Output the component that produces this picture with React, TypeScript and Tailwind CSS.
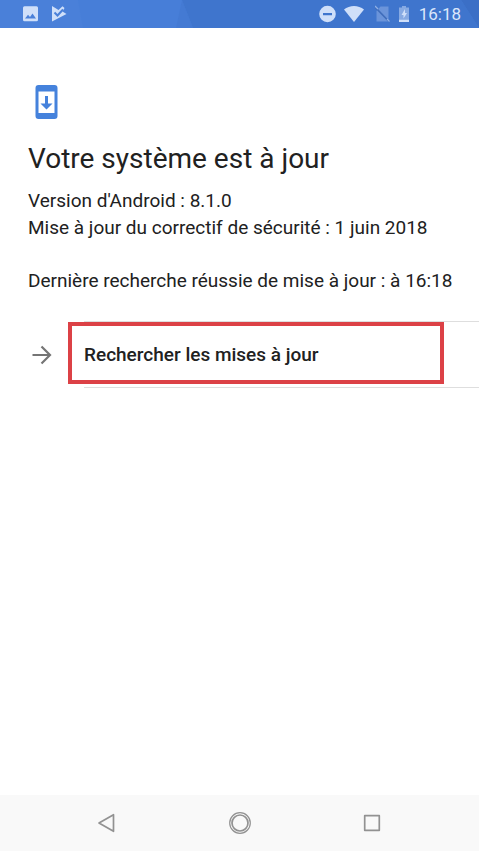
import { ReactNode } from 'react';

const INFO_LINES = [
  "Version d'Android : 8.1.0",
  'Mise à jour du correctif de sécurité : 1 juin 2018',
];

function StatusIcon({ width, children }: { width: number; children: ReactNode }) {
  return (
    <svg width={width} height={20} viewBox={`0 0 ${width} 20`} fill="#cfdff9" aria-hidden="true">
      {children}
    </svg>
  );
}

function StatusBar() {
  return (
    <header className="relative flex h-7 items-center justify-between overflow-hidden bg-[#4a80d9] pl-5 pr-[18px]">
      {/* Faceted backdrop */}
      <svg className="absolute inset-0 h-full w-full" viewBox="0 0 479 28" preserveAspectRatio="none" aria-hidden="true">
        <path d="M78 0H182L176 28H83Z" fill="#477ed8" />
        <path d="M182 0L193 28H176Z" fill="#447ad3" />
        <path d="M182 0H461L479 28H193Z" fill="#3f75cd" />
        <path d="M461 0H479V28Z" fill="#3b6fc6" />
      </svg>

      <div className="relative flex items-center gap-3">
        <StatusIcon width={20}>
          <path
            fillRule="evenodd"
            d="M4.500 2.200h12a1.500 1.500 0 0 1 1.500 1.500v12a1.500 1.500 0 0 1-1.500 1.500h-12a1.500 1.500 0 0 1-1.500-1.500v-12a1.500 1.500 0 0 1 1.500-1.500ZM5 14.500h11l-3.500-5-2.500 3.500-2-2.200Z"
          />
        </StatusIcon>
        <StatusIcon width={16}>
          <path d="M0 2L6.500 6 10.500 2.200 12.500 4 10.500 7.500 14.500 10 0 17.500Z" />
          <path d="M2.500 8.500l3 3 5.500-6" stroke="#4a80d9" strokeWidth="2" fill="none" />
        </StatusIcon>
      </div>

      <div className="relative flex items-center">
        <StatusIcon width={24}>
          <path fillRule="evenodd" d="M8.500 1.700a8.300 8.300 0 1 0 0 16.600 8.300 8.300 0 0 0 0-16.600ZM4 9h9v2.200H4Z" />
        </StatusIcon>
        <StatusIcon width={32}>
          <path d="M1 5.500C6.500 .8 15.500 .8 21 5.500L11 18Z" />
        </StatusIcon>
        <StatusIcon width={24}>
          <path d="M5.500 2.500h8v15H1.500V7Z" opacity=".3" />
          <path d="M0 3l14 14.500" stroke="#3f6dbb" strokeWidth="1.700" />
          <path d="M0 2l3 3M12 15l2.500 2.500" stroke="#8fb0e6" strokeWidth="1.300" />
        </StatusIcon>
        <StatusIcon width={20}>
          <path d="M3 2h4v1.500h3v12h-10v-12h3Z" opacity=".5" />
          <path d="M0 15.500h10v2.500H0Z" />
          <path d="M6 5L2.500 11h2v3.500L8 9H6Z" />
        </StatusIcon>
        <span className="text-[17px] leading-5 text-[#dbe7fb]">16:18</span>
      </div>
    </header>
  );
}

function UpdateIcon() {
  return (
    <svg width="24" height="36" viewBox="0 0 24 36" fill="#4582dc" aria-hidden="true">
      <path
        fillRule="evenodd"
        d="M3.500 1h16A3 3 0 0 1 22.500 4v28a3 3 0 0 1-3 3h-16a3 3 0 0 1-3-3V4a3 3 0 0 1 3-3ZM3.500 7.500v21.500h16V7.500Z"
      />
      <path d="M10 12h3v7.500h4.500L11.500 25.500 5.500 19.500H10Z" />
    </svg>
  );
}

function NavigationBar() {
  return (
    <nav className="mb-px flex h-14 items-center justify-evenly bg-[#f9f9f9]">
      <button type="button" aria-label="Retour">
        <svg width="24" height="24" viewBox="0 0 24 24" fill="none" stroke="#929292" strokeWidth="1.700" strokeLinejoin="round">
          <path d="M18.500 3.700v16.600L4 12Z" />
        </svg>
      </button>
      <button type="button" aria-label="Accueil" className="mx-3.5">
        <svg width="24" height="24" viewBox="0 0 24 24" fill="none" stroke="#929292">
          <circle cx="12" cy="12" r="10.300" strokeWidth="1.200" />
          <circle cx="12" cy="12" r="8" strokeWidth="1.700" />
        </svg>
      </button>
      <button type="button" aria-label="Applications récentes">
        <svg width="24" height="24" viewBox="0 0 24 24" fill="none" stroke="#929292" strokeWidth="1.700" strokeLinejoin="round">
          <path d="M4.700 4.700h14.600v14.600H4.700Z" />
        </svg>
      </button>
    </nav>
  );
}

export default function App() {
  return (
    <div className="flex min-h-screen flex-col bg-white font-[Roboto,sans-serif] text-[#212121]">
      <StatusBar />

      <main className="flex-1 pt-14">
        <section className="pl-7 pr-4">
          <div className="pl-[7px]">
            <UpdateIcon />
          </div>
          <h1 className="mt-[21px] text-[28px] leading-9">Votre système est à jour</h1>
          <div className="mt-2.5 text-[19px] leading-[27px]">
            {INFO_LINES.map((line) => (
              <p key={line}>{line}</p>
            ))}
            <p className="mt-[26px]">Dernière recherche réussie de mise à jour : à 16:18</p>
          </div>
        </section>

        <div className="relative mt-[27px]">
          <button type="button" className="flex w-full items-center text-left">
            <span className="flex w-21 pl-8">
              <svg width="20" height="20" viewBox="0 0 20 20" fill="none" stroke="#757575" strokeWidth="2.200" aria-hidden="true">
                <path d="M.5 10h17M9.500 1.500L18 10l-8.500 8.500" />
              </svg>
            </span>
            <span className="flex-1 border-y border-[#dedede] py-[19px] text-[19px] font-medium leading-[27px]">
              Rechercher les mises à jour
            </span>
          </button>
          {/* Highlight frame over the row */}
          <div className="pointer-events-none absolute bottom-1 left-17 right-[35px] top-px border-4 border-[#dc4146]" />
        </div>
      </main>

      <NavigationBar />
    </div>
  );
}
